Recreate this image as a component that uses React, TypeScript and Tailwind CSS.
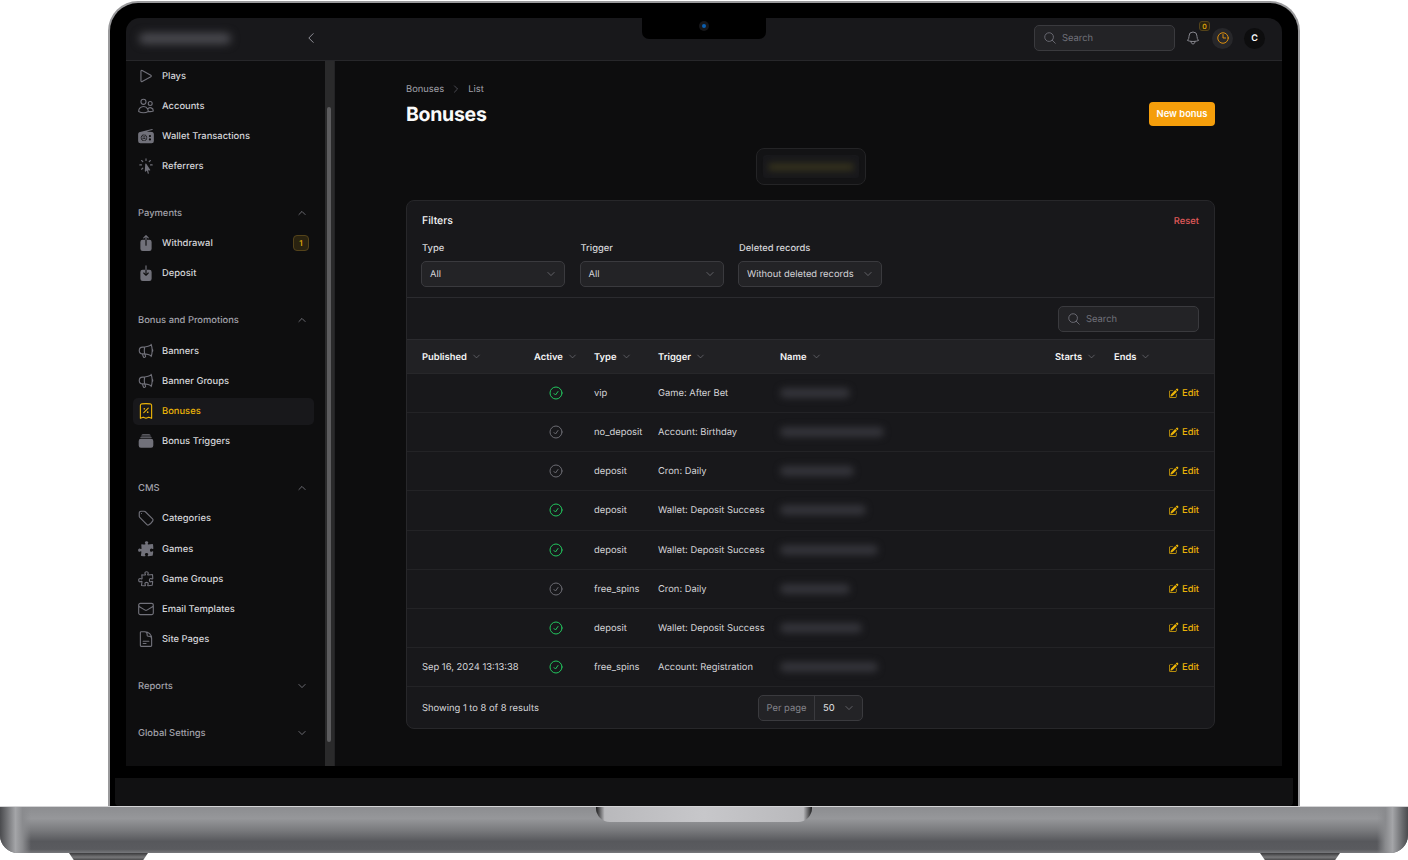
import React from "react";
import {
  HiOutlinePlay, HiOutlineUsers, HiRadio, HiCursorArrowRays, HiArrowUpOnSquare, HiArrowDownOnSquare,
  HiOutlineMegaphone, HiOutlineReceiptPercent, HiRectangleStack, HiOutlineTag, HiPuzzlePiece, HiOutlinePuzzlePiece,
  HiOutlineEnvelope, HiOutlineDocumentText, HiOutlineBell, HiOutlineClock, HiOutlineMagnifyingGlass,
  HiOutlineChevronUp, HiOutlineChevronDown, HiOutlineChevronLeft, HiOutlineChevronRight, HiOutlineCheckCircle, HiPencilSquare,
} from "react-icons/hi2";

type IconT = React.ComponentType<{ className?: string }>;

function Item({ icon: Icon, label, active, badge }: { icon: IconT; label: string; active?: boolean; badge?: string }) {
  return (
    <div className={`flex h-[27px] items-center gap-[7px] rounded-[5px] pl-[4px] pr-[5px] ${active ? "bg-[#18181b]" : ""}`}>
      <Icon className={`h-[18px] w-[18px] shrink-0 ${active ? "text-[#eab308]" : "text-[#71717a]"}`} />
      <span className={`flex-1 pt-[2px] text-[9.4px] font-medium leading-[12px] ${active ? "text-[#eab308]" : "text-[#d4d4d8]"}`}>{label}</span>
      {badge && (
        <span className="flex h-4 w-4 items-center justify-center rounded-[4px] border border-[#54431a] bg-[#2a2310] text-[8px] font-medium text-[#eab308]">
          {badge}
        </span>
      )}
    </div>
  );
}

function Group({ label, open, children }: { label?: string; open?: boolean; children?: React.ReactNode }) {
  return (
    <div className="flex flex-col gap-[3.2px]">
      {label && (
        <div className="flex h-[27px] items-center justify-between px-[5px]">
          <span className="pt-[2px] text-[9.4px] font-medium leading-[12px] text-[#a1a1aa]">{label}</span>
          {open ? <HiOutlineChevronUp className="mr-[2px] h-[10px] w-[10px] text-[#a1a1aa]" /> : <HiOutlineChevronDown className="mr-[2px] h-[10px] w-[10px] text-[#a1a1aa]" />}
        </div>
      )}
      {children}
    </div>
  );
}

function Sidebar() {
  return (
    <aside className="flex w-[209px] shrink-0 border-r border-[#232325] bg-[#0e0e0f]">
      <nav className="flex w-[199px] shrink-0 flex-col gap-5 overflow-hidden pl-[7px] pr-[11px] pt-[1px]">
        <Group>
          <Item icon={HiOutlinePlay} label="Plays" />
          <Item icon={HiOutlineUsers} label="Accounts" />
          <Item icon={HiRadio} label="Wallet Transactions" />
          <Item icon={HiCursorArrowRays} label="Referrers" />
        </Group>
        <Group label="Payments" open>
          <Item icon={HiArrowUpOnSquare} label="Withdrawal" badge="1" />
          <Item icon={HiArrowDownOnSquare} label="Deposit" />
        </Group>
        <Group label="Bonus and Promotions" open>
          <Item icon={HiOutlineMegaphone} label="Banners" />
          <Item icon={HiOutlineMegaphone} label="Banner Groups" />
          <Item icon={HiOutlineReceiptPercent} label="Bonuses" active />
          <Item icon={HiRectangleStack} label="Bonus Triggers" />
        </Group>
        <Group label="CMS" open>
          <Item icon={HiOutlineTag} label="Categories" />
          <Item icon={HiPuzzlePiece} label="Games" />
          <Item icon={HiOutlinePuzzlePiece} label="Game Groups" />
          <Item icon={HiOutlineEnvelope} label="Email Templates" />
          <Item icon={HiOutlineDocumentText} label="Site Pages" />
        </Group>
        <Group label="Reports" />
        <Group label="Global Settings" />
      </nav>
      <div className="w-[9px] bg-[#2a2a2b] pb-6 pl-[2px] pr-[3px] pt-[46px]">
        <div className="h-full rounded-full bg-[#5c5c5e]" />
      </div>
    </aside>
  );
}

function SelectBox({ text, width = "w-[144px]" }: { text: string; width?: string }) {
  return (
    <div className={`-ml-px flex h-[26px] ${width} items-center justify-between rounded-[5px] border border-[#3a3a3e] bg-[#232326] px-2`}>
      <span className="pt-[2px] text-[9.4px] leading-[12px] text-[#d4d4d8]">{text}</span>
      <HiOutlineChevronDown className="h-[10px] w-[10px] text-[#85858c]" />
    </div>
  );
}

function SearchBox({ className }: { className?: string }) {
  return (
    <div className={`flex h-[26px] w-[141px] items-center gap-[5px] rounded-[5px] border border-[#3a3a3e] bg-[#232326] px-2 ${className ?? ""}`}>
      <HiOutlineMagnifyingGlass className="h-[14px] w-[14px] text-[#71717a]" />
      <span className="pt-[2px] text-[9.4px] leading-[12px] text-[#71717a]">Search</span>
    </div>
  );
}

function HeadCell({ label }: { label?: string }) {
  if (!label) return <div />;
  return (
    <div className="flex items-center gap-[5px]">
      <span className="pt-[2px] text-[9.4px] font-semibold leading-[12px] text-[#f4f4f5]">{label}</span>
      <HiOutlineChevronDown className="h-[9px] w-[9px] text-[#85858c]" />
    </div>
  );
}

const cols = "grid grid-cols-[112px_60px_64px_122px_275px_59px_1fr] items-center pl-[15px] pr-[15px]";

const rows = [
  { pub: "", on: true, type: "vip", trig: "Game: After Bet", w: "w-[70px]" },
  { pub: "", on: false, type: "no_deposit", trig: "Account: Birthday", w: "w-[104px]" },
  { pub: "", on: false, type: "deposit", trig: "Cron: Daily", w: "w-[74px]" },
  { pub: "", on: true, type: "deposit", trig: "Wallet: Deposit Success", w: "w-[86px]" },
  { pub: "", on: true, type: "deposit", trig: "Wallet: Deposit Success", w: "w-[98px]" },
  { pub: "", on: false, type: "free_spins", trig: "Cron: Daily", w: "w-[70px]" },
  { pub: "", on: true, type: "deposit", trig: "Wallet: Deposit Success", w: "w-[82px]" },
  { pub: "Sep 16, 2024 13:13:38", on: true, type: "free_spins", trig: "Account: Registration", w: "w-[98px]" },
];

function Table() {
  return (
    <div>
      <div className={`${cols} h-[34px] border-b border-[#27272a] bg-[#212124]`}>
        <HeadCell label="Published" />
        <HeadCell label="Active" />
        <HeadCell label="Type" />
        <HeadCell label="Trigger" />
        <HeadCell label="Name" />
        <HeadCell label="Starts" />
        <HeadCell label="Ends" />
      </div>
      {rows.map((r, i) => (
        <div key={i} className={`${cols} h-[39.15px] border-b border-[#232326] text-[9.4px] leading-[12px] text-[#d4d4d8]`}>
          <span className="pt-[2px]">{r.pub}</span>
          <span className="pl-[14px]">
            <HiOutlineCheckCircle className={`h-4 w-4 ${r.on ? "text-[#22c55e]" : "text-[#6b6b72]"}`} />
          </span>
          <span className="pt-[2px]">{r.type}</span>
          <span className="pt-[2px]">{r.trig}</span>
          <span className={`block h-[10px] ${r.w} rounded-full bg-[#34343a] blur-[3.5px]`} />
          <span />
          <span className="flex items-center justify-end gap-[3px] font-medium text-[#eab308]">
            <HiPencilSquare className="h-[11px] w-[11px]" />
            <span className="pt-[2px]">Edit</span>
          </span>
        </div>
      ))}
    </div>
  );
}

function Main() {
  return (
    <main className="min-w-0 flex-1 bg-[#0d0d0e] pl-[71px] pr-[67px] pt-[21px]">
      <div className="flex items-center gap-[7px] text-[9.4px] leading-[12px] text-[#a1a1aa]">
        <span className="pt-[2px]">Bonuses</span>
        <HiOutlineChevronRight className="h-[10px] w-[10px] text-[#71717a]" />
        <span className="pt-[2px]">List</span>
      </div>
      <div className="mt-[4px] flex items-start justify-between">
        <h1 className="mt-[1px] text-[19.5px] font-bold leading-[26px] tracking-[-0.3px] text-[#fafafa]">Bonuses</h1>
        <button className="mt-[2px] flex h-6 w-[66px] items-center justify-center rounded-[4px] bg-[#f59e0b] text-[9.4px] font-semibold leading-[12px] text-white">
          New bonus
        </button>
      </div>
      <div className="mt-[21px] flex justify-center">
        <div className="flex h-[37px] w-[110px] items-center justify-center rounded-[8px] border border-[#242426] bg-[#131315] p-[6px]">
          <div className="flex h-full w-full items-center justify-center rounded-[3px] bg-[#18181b]">
            <div className="h-[8px] w-[86px] rounded-full bg-[#33301c] blur-[3px]" />
          </div>
        </div>
      </div>
      <section className="mt-[15px] overflow-hidden rounded-[8px] border border-[#27272a] bg-[#18181b]">
        <div className="h-[97px] border-b border-[#2b2b2f] px-[15px] pt-[14px]">
          <div className="flex h-[12px] items-center justify-between">
            <span className="text-[10.5px] font-medium leading-[12px] text-[#f4f4f5]">Filters</span>
            <span className="pt-[2px] text-[9.4px] font-medium leading-[12px] text-[#e05a5a]">Reset</span>
          </div>
          <div className="mt-[17px] flex gap-[15.5px]">
            <div className="flex flex-col gap-[7px]">
              <span className="text-[9.4px] font-medium leading-[10px] text-[#d4d4d8]">Type</span>
              <SelectBox text="All" />
            </div>
            <div className="flex flex-col gap-[7px]">
              <span className="text-[9.4px] font-medium leading-[10px] text-[#d4d4d8]">Trigger</span>
              <SelectBox text="All" />
            </div>
            <div className="flex flex-col gap-[7px]">
              <span className="text-[9.4px] font-medium leading-[10px] text-[#d4d4d8]">Deleted records</span>
              <SelectBox text="Without deleted records" />
            </div>
          </div>
        </div>
        <div className="flex h-[42px] items-center justify-end border-b border-[#2b2b2f] pr-[15px]">
          <SearchBox />
        </div>
        <Table />
        <div className="relative flex h-[41px] items-center pl-[15px]">
          <span className="pt-[2px] text-[9.4px] leading-[12px] text-[#d4d4d8]">Showing 1 to 8 of 8 results</span>
          <div className="absolute left-[351px] flex h-[26px] w-[105px] items-center rounded-[5px] border border-[#3a3a3e] bg-[#232326]">
            <span className="flex h-full w-[56px] items-center justify-center border-r border-[#3a3a3e] pt-[2px] text-[9.4px] leading-[12px] text-[#85858c]">Per page</span>
            <span className="flex flex-1 items-center justify-between px-2 text-[9.4px] leading-[12px] text-[#e4e4e7]">
              <span className="pt-[2px]">50</span>
              <HiOutlineChevronDown className="h-[10px] w-[10px] text-[#85858c]" />
            </span>
          </div>
        </div>
      </section>
    </main>
  );
}

function TopBar() {
  return (
    <header className="relative flex h-[43px] shrink-0 items-center border-b border-[#27272a] bg-[#18181b] pb-[2px] pl-[13px] pr-[17px]">
      <div className="h-[11px] w-[92px] rounded-full bg-[#4a4a50] blur-[4px]" />
      <HiOutlineChevronLeft className="ml-[73px] h-[14px] w-[14px] text-[#a1a1aa]" />
      <div className="ml-auto flex items-center">
        <SearchBox />
        <div className="relative ml-[10px] mr-[11px]">
          <HiOutlineBell className="h-4 w-4 text-[#85858c]" />
          <span className="absolute -right-[9px] -top-[9px] flex h-[10px] w-[11px] items-center justify-center rounded-[3px] border border-[#54431a] bg-[#2a2310] text-[7px] font-medium leading-none text-[#eab308]">0</span>
        </div>
        <div className="flex h-[21px] w-[21px] items-center justify-center rounded-full bg-[#27272a]">
          <HiOutlineClock className="h-[14px] w-[14px] text-[#f59e0b]" />
        </div>
        <div className="ml-[11px] flex h-[21px] w-[21px] items-center justify-center rounded-full bg-[#0d0d0e] text-[9px] font-semibold leading-none text-white">C</div>
      </div>
    </header>
  );
}

export default function App() {
  return (
    <div className="flex h-[860px] w-[1408px] flex-col overflow-hidden bg-white font-['Inter',sans-serif] [text-rendering:geometricPrecision]">
      <div className="relative ml-[108px] mt-px flex h-[805px] w-[1192px] shrink-0 flex-col rounded-t-[30px] border-x-2 border-t-2 border-[#9a9a9c] bg-black px-4 pt-[15px]">
        <div className="flex h-[748px] shrink-0 flex-col overflow-hidden rounded-t-[14px]">
          <TopBar />
          <div className="flex min-h-0 flex-1">
            <Sidebar />
            <Main />
          </div>
        </div>
        <div className="-mx-[11px] mt-3 flex-1 rounded-b-[4px] bg-[#111112]" />
        <div className="absolute left-[532px] top-[15px] flex h-[21px] w-[124px] justify-center rounded-b-[7px] bg-black pt-[3px]">
          <span className="flex h-[10px] w-[10px] items-center justify-center rounded-full bg-[#17171a]">
            <span className="h-[4px] w-[4px] rounded-full bg-[#0b5fb0]" />
          </span>
        </div>
      </div>
      <div className="relative h-[47px] w-[1408px] shrink-0 rounded-b-[18px] border-t border-[#d4d4d6] bg-[linear-gradient(90deg,#4a4b4e_0,#6a6b6e_0.4%,#a4a5a8_1.1%,#8a8b8e_1.6%,transparent_2.2%,transparent_97.8%,#8a8b8e_98.4%,#a4a5a8_98.9%,#6a6b6e_99.6%,#4a4b4e_100%),linear-gradient(180deg,#8c8d90_0,#96979a_25%,#7a7b7e_50%,#57585c_75%,#5a5b5f_92%,#77787b_100%)]">
        <div className="absolute left-[596px] top-0 h-[15px] w-[216px] rounded-b-[14px] bg-[linear-gradient(90deg,#1a1a1b_0,#b9b9bc_4%,#c7c7ca_50%,#b9b9bc_96%,#1a1a1b_100%)]" />
      </div>
      <div className="flex w-[1408px] justify-between pl-[69px] pr-[68px]">
        <div className="h-[7px] w-[79px] bg-[linear-gradient(180deg,#3a3a3c,#777779_60%,#4a4a4c)] [clip-path:polygon(0_0,100%_0,94%_100%,6%_100%)]" />
        <div className="h-[7px] w-[80px] bg-[linear-gradient(180deg,#3a3a3c,#777779_60%,#4a4a4c)] [clip-path:polygon(0_0,100%_0,94%_100%,6%_100%)]" />
      </div>
    </div>
  );
}
